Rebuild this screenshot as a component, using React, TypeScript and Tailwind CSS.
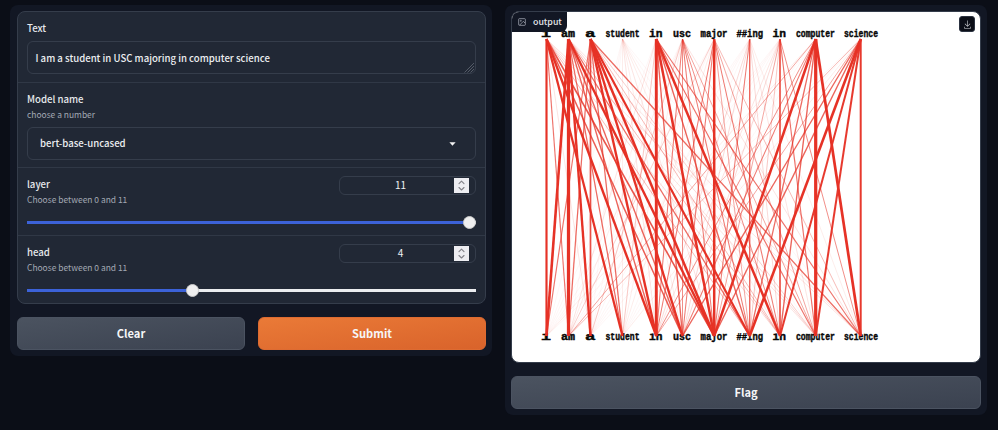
import type { ReactNode } from "react";

const SANS = "font-['Noto_Sans_CJK_SC','Noto_Sans',sans-serif]";

type Token = { label: string; x: number; left: number; width: number };

const tokens: Token[] = [
  { label: "i", x: 34.5, left: 29, width: 10 },
  { label: "am", x: 56.5, left: 49, width: 14 },
  { label: "a", x: 78.5, left: 73, width: 10.5 },
  { label: "student", x: 110.5, left: 93.5, width: 34 },
  { label: "in", x: 144.3, left: 137, width: 13.5 },
  { label: "usc", x: 170.5, left: 161, width: 18 },
  { label: "major", x: 202.2, left: 188.5, width: 27 },
  { label: "##ing", x: 237.7, left: 224.5, width: 26.5 },
  { label: "in", x: 268, left: 260.5, width: 13.5 },
  { label: "computer", x: 303.7, left: 284, width: 39 },
  { label: "science", x: 348.7, left: 332, width: 34 },
];

// Attention weight from each upper token (row) to each lower token (column).
const attention: number[][] = [
  [2.0, 1.1, 0.3, 2.1, 2.2, 1.4, 1.5, 0.7, 0.4, 0.3, 0.3],
  [2.4, 3.0, 2.2, 1.2, 1.3, 1.3, 2.2, 1.2, 0.7, 0.4, 0.3],
  [1.1, 1.2, 1.6, 1.2, 2.2, 2.2, 2.3, 2.0, 0.7, 0.5, 1.2],
  [0.1, 0.1, 0.1, 0.2, 0.3, 0.2, 0.3, 0.2, 0.2, 0.1, 0.1],
  [0.1, 0.3, 0.1, 0.6, 2.7, 1.3, 2.3, 1.3, 2.3, 1.1, 1.1],
  [0.1, 0.2, 0.6, 0.2, 1.0, 0.9, 1.0, 1.0, 0.9, 0.8, 0.3],
  [0.1, 0.5, 0.1, 0.2, 1.0, 1.0, 2.3, 0.8, 1.0, 0.8, 0.7],
  [0.1, 0.1, 0.1, 0.1, 0.4, 0.4, 1.0, 1.3, 0.4, 0.3, 0.2],
  [0.1, 0.1, 0.1, 0.1, 0.3, 0.4, 0.8, 0.6, 1.6, 1.1, 0.9],
  [0.2, 0.8, 0.1, 0.1, 0.9, 1.0, 2.3, 1.2, 1.3, 3.0, 2.5],
  [0.1, 0.7, 0.1, 0.2, 0.8, 1.3, 1.3, 2.4, 1.9, 1.9, 1.9],
];

function TokenRow({ y }: { y: number }) {
  return (
    <g fill="#080808" className="font-['Liberation_Mono',monospace] text-[10.2px] font-bold">
      {tokens.map((t, i) => (
        <text key={i} x={t.left} y={y} textLength={t.width} lengthAdjust="spacingAndGlyphs" stroke="#080808" strokeWidth={0.4}>
          {t.label}
        </text>
      ))}
    </g>
  );
}

function AttentionChart() {
  return (
    <svg className="block h-full w-full" viewBox="0 0 468 350">
      <TokenRow y={25} />
      <TokenRow y={327.6} />
      <rect x={20} y={316} width={350} height={5} fill="#fff" />
      <g stroke="#e63226">
        {attention.flatMap((row, from) =>
          row.map((weight, to) => (
            <line
              key={`${from}-${to}`}
              x1={tokens[from].x}
              y1={27}
              x2={tokens[to].x}
              y2={324}
              strokeWidth={Math.max(0.7, weight < 2 ? weight * 1.05 : weight * 1.08)}
              strokeOpacity={weight < 1 ? weight * 0.65 : Math.min(1, 0.3 + weight * 0.35)}
            />
          )),
        )}
      </g>
    </svg>
  );
}

function Label({ children }: { children: ReactNode }) {
  return <div className="text-[9.65px] leading-4 font-medium text-[#e6e8ec]">{children}</div>;
}

function Info({ children }: { children: ReactNode }) {
  return <div className="-mt-px text-[8.45px] leading-4 text-[#a3a8b4]">{children}</div>;
}

function SliderField({ name, value }: { name: string; value: number }) {
  const fraction = value / 11;
  return (
    <div className="h-[68px] px-[9px] pt-2">
      <div className="flex h-8 items-start justify-between">
        <div>
          <Label>{name}</Label>
          <Info>Choose between 0 and 11</Info>
        </div>
        <div className="relative flex h-[19px] w-[137px] items-center rounded-md border border-[#353d4b] text-[10px] text-[#f0f1f4]">
          <span className="w-[121px] pb-px text-center leading-4">{value}</span>
          <span className="absolute top-[1px] right-[6px] flex h-[15px] w-[15px] items-center justify-center bg-[#ededf1]">
            <svg viewBox="0 0 15 15" className="h-[15px] w-[15px]" fill="none" stroke="#838389" strokeWidth="1.1" strokeLinecap="round" strokeLinejoin="round">
              <path d="M5 5.7 7.5 3.2 10 5.7M5 9.5 7.5 12 10 9.5" />
            </svg>
          </span>
        </div>
      </div>
      <div className="relative mt-[13px] h-[3px] bg-[#ebedef]">
        <div className="h-full bg-[#3c62d8]" style={{ width: `${fraction * 97.3 + 1.4}%` }} />
        <div
          className="absolute top-[-5px] h-[13px] w-[13px] rounded-full border border-[#c9c9c9] bg-[#efefef]"
          style={{ left: `calc((100% - 13px) * ${fraction})` }}
        />
      </div>
    </div>
  );
}

function Button({ children, primary = false }: { children: ReactNode; primary?: boolean }) {
  return (
    <button
      className={`flex h-[33px] flex-1 items-center justify-center rounded-md border pb-px text-[11.1px] leading-5 font-bold text-[#f6f6f7] ${
        primary
          ? "border-[#de6b31] bg-gradient-to-br from-[#ea7a37] to-[#d9632b]"
          : "border-[#4b5361] bg-gradient-to-br from-[#4b5360] to-[#3b4250]"
      }`}
    >
      {children}
    </button>
  );
}

export default function App() {
  return (
    <div className={`flex h-[430px] w-[998px] items-start gap-[13px] overflow-hidden bg-[#0b0e17] pt-[5px] pl-[10px] ${SANS}`}>
      <section className="h-[351px] w-[482px] rounded-lg bg-[#121724] py-[6px] pl-[7px]">
        <div className="h-[293px] w-[469px] divide-y divide-[#303846] rounded-lg border border-[#353d4b] bg-[#212835]">
          <div className="h-[71px] px-[9px] pt-2">
            <Label>Text</Label>
            <div className="relative mt-[5px] h-[33px] rounded-md border border-[#353d4b] px-[7.5px] text-[9.6px] leading-[32px] font-medium text-[#eceef1]">
              I am a student in USC majoring in computer science
              <svg className="absolute right-0 bottom-0 h-[11px] w-[11px]" viewBox="0 0 11 11" stroke="#777e89" strokeWidth="0.6">
                <path d="M0.5 10.5 10 1M3.5 10.5 10 4M6.5 10.5 10 7" />
              </svg>
            </div>
          </div>
          <div className="h-[85px] px-[9px] pt-2">
            <Label>Model name</Label>
            <Info>choose a number</Info>
            <div className="mt-[5px] flex h-[33px] items-center justify-between rounded-md border border-[#353d4b] pr-[19px] pl-[12px] text-[9.6px] font-medium text-[#eceef1]">
              <span>bert-base-uncased</span>
              <svg className="h-[4px] w-[7px]" viewBox="0 0 7 4" fill="#f4f4f5">
                <path d="M0.4 0.2H6.6L3.5 3.8Z" />
              </svg>
            </div>
          </div>
          <SliderField name="layer" value={11} />
          <SliderField name="head" value={4} />
        </div>
        <div className="mt-[13px] flex w-[469px] gap-[13px]">
          <Button>Clear</Button>
          <Button primary>Submit</Button>
        </div>
      </section>

      <section className="h-[410px] w-[482px] rounded-lg bg-[#121724] p-[6px]">
        <div className="relative h-[352px] overflow-hidden rounded-lg border border-[#353d4b] bg-white">
          <AttentionChart />
          <div className="absolute top-0 left-0 flex h-[20px] w-[55px] items-center gap-[7px] rounded-br-md bg-[#121724] pl-[6px] text-[8.8px] leading-4 font-medium text-[#e4e6ea]">
            <svg className="h-[8px] w-[8px] shrink-0" viewBox="0 0 24 24" fill="none" stroke="#b9bec8" strokeWidth="2">
              <rect x="2" y="2" width="20" height="20" rx="2" />
              <circle cx="8.5" cy="8.5" r="1.5" />
              <path d="m21 15-5-5L5 21" />
            </svg>
            <span>output</span>
          </div>
          <div className="absolute top-[4px] right-[5px] flex h-[16px] w-[16px] items-center justify-center rounded-[3px] border border-[#2b3240] bg-[#0b0e17]">
            <svg className="h-[9px] w-[9px]" viewBox="0 0 32 32" fill="#dfe1e5">
              <path d="M26 24v4H6v-4H4v4a2 2 0 0 0 2 2h20a2 2 0 0 0 2-2v-4zm0-10-1.41-1.41L17 20.17V2h-2v18.17l-7.59-7.58L6 14l10 10z" />
            </svg>
          </div>
        </div>
        <div className="mt-[13px] flex">
          <Button>Flag</Button>
        </div>
      </section>
    </div>
  );
}
